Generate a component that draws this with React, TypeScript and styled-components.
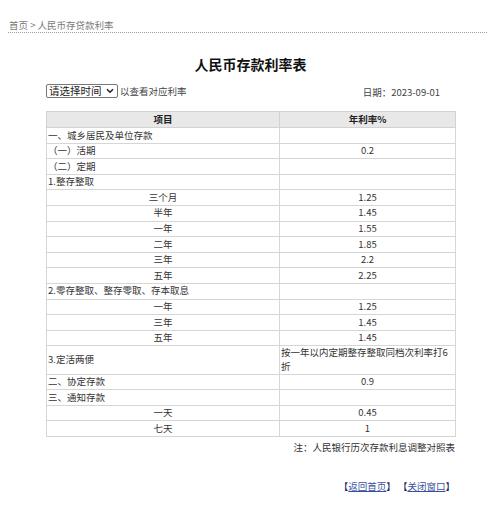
import React from "react";
import styled, { createGlobalStyle } from "styled-components";

const Global = createGlobalStyle`
  html, body { margin: 0; padding: 0; background: #fff; }
  body {
    font-family: "Noto Sans CJK SC", "Noto Sans", sans-serif;
    color: #333;
  }
`;

const Page = styled.div`
  width: 500px;
  min-height: 512px;
  background: #fff;
`;

const Breadcrumb = styled.div`
  margin: 0 13px 0 8px;
  padding-top: 18px;
  padding-left: 1px;
  font-size: 9.5px;
  line-height: 14px;
  color: #7a7a7a;
  border-bottom: 1px dotted #9a9a9a;
`;

const Main = styled.div`
  width: 409px;
  margin: 0 auto;
  padding-left: 1px;
`;

const Title = styled.h1`
  margin: 21px 0 0;
  font-size: 14px;
  line-height: 20px;
  font-weight: bold;
  text-align: center;
  color: #111;
`;

const Toolbar = styled.div`
  margin-top: 10px;
  display: flex;
  align-items: center;
  justify-content: space-between;
  height: 14px;
`;

const Left = styled.div`
  display: flex;
  align-items: center;
  gap: 2px;
  font-size: 9.5px;
  color: #444;
`;

const SelectWrap = styled.span`
  position: relative;
  display: inline-block;
`;

const Select = styled.select`
  appearance: none;
  -webkit-appearance: none;
  width: 72px;
  height: 14px;
  box-sizing: border-box;
  border: 1px solid #777;
  border-radius: 2px;
  padding: 0 0 0 2px;
  font-family: "Noto Sans CJK SC", sans-serif;
  font-size: 10.5px;
  line-height: 12px;
  color: #222;
  background: #fff;
`;

const Chevron = styled.svg`
  position: absolute;
  right: 4px;
  top: 4px;
  width: 8px;
  height: 6px;
  pointer-events: none;
`;

const DateText = styled.div`
  font-size: 9.5px;
  color: #444;
  padding-right: 15px;
  padding-top: 2px;
`;

const Table = styled.table`
  margin-top: 13px;
  width: 409px;
  border-collapse: collapse;
  table-layout: fixed;
  font-size: 9.5px;
  color: #333;
`;

const HeadRow = styled.tr`
  height: 16px;
`;

const BodyRow = styled.tr`
  height: 15.6px;
`;

const Th = styled.th`
  padding: 0;
  background: #e8e8e8;
  border: 1px solid #d2d2d2;
  font-weight: bold;
  color: #222;
  line-height: 13px;
`;

const Td = styled.td<{ $align?: "left" | "center" }>`
  padding: 0 1px;
  border: 1px solid #d6d6d6;
  text-align: ${(p) => p.$align ?? "center"};
  line-height: 13.6px;
  vertical-align: middle;
`;

const Note = styled.div`
  margin-top: 3px;
  text-align: right;
  font-size: 9.5px;
  line-height: 14px;
  color: #333;
`;

const Links = styled.div`
  margin-top: 25px;
  text-align: right;
  font-size: 9.5px;
  line-height: 14px;
  color: #1f2a5a;
`;

const Link = styled.a`
  color: #3a4f9e;
  text-decoration: underline;
`;

type Row = { label: string; rate?: string; indent?: boolean; rateLeft?: boolean };

const rows: Row[] = [
  { label: "一、城乡居民及单位存款" },
  { label: "（一）活期", rate: "0.2" },
  { label: "（二）定期" },
  { label: "1.整存整取" },
  { label: "三个月", rate: "1.25", indent: true },
  { label: "半年", rate: "1.45", indent: true },
  { label: "一年", rate: "1.55", indent: true },
  { label: "二年", rate: "1.85", indent: true },
  { label: "三年", rate: "2.2", indent: true },
  { label: "五年", rate: "2.25", indent: true },
  { label: "2.零存整取、整存零取、存本取息" },
  { label: "一年", rate: "1.25", indent: true },
  { label: "三年", rate: "1.45", indent: true },
  { label: "五年", rate: "1.45", indent: true },
  { label: "3.定活两便", rate: "按一年以内定期整存整取同档次利率打6折", rateLeft: true },
  { label: "二、协定存款", rate: "0.9" },
  { label: "三、通知存款" },
  { label: "一天", rate: "0.45", indent: true },
  { label: "七天", rate: "1", indent: true },
];

export default function App() {
  return (
    <Page>
      <Global />
      <Breadcrumb>首页 &gt; 人民币存贷款利率</Breadcrumb>
      <Main>
        <Title>人民币存款利率表</Title>
        <Toolbar>
          <Left>
            <SelectWrap>
              <Select defaultValue="">
                <option value="">请选择时间</option>
              </Select>
              <Chevron viewBox="0 0 8 6">
                <path d="M1 1.2 L4 4.2 L7 1.2" fill="none" stroke="#222" strokeWidth="1.6" />
              </Chevron>
            </SelectWrap>
            <span>以查看对应利率</span>
          </Left>
          <DateText>日期：2023-09-01</DateText>
        </Toolbar>
        <Table>
          <colgroup>
            <col style={{ width: 233 }} />
            <col style={{ width: 176 }} />
          </colgroup>
          <thead>
            <HeadRow>
              <Th>项目</Th>
              <Th>年利率%</Th>
            </HeadRow>
          </thead>
          <tbody>
            {rows.map((r, i) => (
              <BodyRow key={i}>
                <Td $align={r.indent ? "center" : "left"}>{r.label}</Td>
                <Td $align={r.rateLeft ? "left" : "center"}>{r.rate ?? ""}</Td>
              </BodyRow>
            ))}
          </tbody>
        </Table>
        <Note>注：人民银行历次存款利息调整对照表</Note>
        <Links>
          【<Link href="#">返回首页</Link>】 【<Link href="#">关闭窗口</Link>】
        </Links>
      </Main>
    </Page>
  );
}
